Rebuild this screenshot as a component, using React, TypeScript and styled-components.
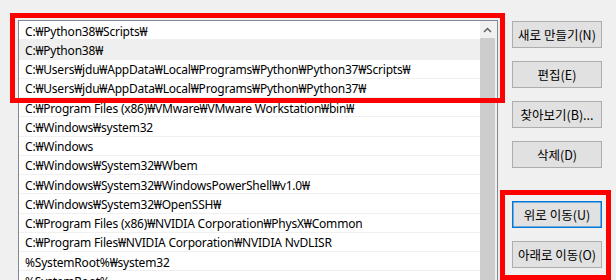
import React from "react";
import styled, { createGlobalStyle } from "styled-components";

const Global = createGlobalStyle`
  html, body { margin: 0; padding: 0; background: #f0f0f0; }
  body { font-family: "Noto Sans", "Noto Sans CJK KR", sans-serif; }
`;

const Page = styled.div`
  position: relative;
  width: 616px;
  height: 280px;
  overflow: hidden;
  background: #f0f0f0;
  display: flex;
  align-items: flex-start;
`;

const ListBox = styled.div`
  margin: 20px 0 0 18px;
  width: 480px;
  height: 300px;
  box-sizing: border-box;
  border: 1px solid #828790;
  background: #fff;
  display: flex;
`;

const Rows = styled.div`
  flex: 1;
  display: flex;
  flex-direction: column;
`;

const Row = styled.div<{ $selected?: boolean }>`
  height: 19.25px;
  flex: none;
  box-sizing: border-box;
  border-bottom: 1px solid #f0f0f0;
  background: ${(p) => (p.$selected ? "#efefef" : "#fff")};
  display: flex;
  align-items: center;
  padding: 2px 0 0 6px;
  font-family: "Noto Sans", "Noto Sans CJK KR", sans-serif;
  font-size: 12px;
  letter-spacing: -0.2px;
  color: #000;
  white-space: nowrap;
`;

const ScrollBar = styled.div`
  width: 17px;
  flex: none;
  display: flex;
  flex-direction: column;
  background: #f0f0f0;
`;

const ArrowButton = styled.div`
  height: 17px;
  display: flex;
  align-items: center;
  justify-content: center;
  padding-right: 2px;
`;

const Thumb = styled.div`
  flex: 1;
  width: 15px;
  background: #cdcdcd;
`;

const ButtonColumn = styled.div`
  margin: 21px 0 0 14px;
  display: flex;
  flex-direction: column;
  gap: 13px;
`;

const Button = styled.button<{ $default?: boolean; $spaced?: boolean }>`
  width: 90px;
  height: 27px;
  box-sizing: border-box;
  padding: 0;
  margin-top: ${(p) => (p.$spaced ? "20px" : "0")};
  background: #e1e1e1;
  border: 1px solid ${(p) => (p.$default ? "#0078d7" : "#adadad")};
  box-shadow: ${(p) => (p.$default ? "inset 0 0 0 0.5px #0078d7" : "none")};
  font-family: "Noto Sans CJK KR", "Noto Sans", sans-serif;
  font-size: 12.5px;
  color: #000;
  white-space: nowrap;
`;

const Highlight = styled.div<{ $x: number; $y: number; $w: number; $h: number }>`
  position: absolute;
  left: ${(p) => p.$x}px;
  top: ${(p) => p.$y}px;
  width: ${(p) => p.$w}px;
  height: ${(p) => p.$h}px;
  box-sizing: border-box;
  border: 5.5px solid #ff0000;
  pointer-events: none;
`;

const paths = [
  "C:₩Python38₩Scripts₩",
  "C:₩Python38₩",
  "C:₩Users₩jdu₩AppData₩Local₩Programs₩Python₩Python37₩Scripts₩",
  "C:₩Users₩jdu₩AppData₩Local₩Programs₩Python₩Python37₩",
  "C:₩Program Files (x86)₩VMware₩VMware Workstation₩bin₩",
  "C:₩Windows₩system32",
  "C:₩Windows",
  "C:₩Windows₩System32₩Wbem",
  "C:₩Windows₩System32₩WindowsPowerShell₩v1.0₩",
  "C:₩Windows₩System32₩OpenSSH₩",
  "C:₩Program Files (x86)₩NVIDIA Corporation₩PhysX₩Common",
  "C:₩Program Files₩NVIDIA Corporation₩NVIDIA NvDLISR",
  "%SystemRoot%₩system32",
  "%SystemRoot%",
];

export default function App() {
  return (
    <>
      <Global />
      <Page>
        <ListBox>
          <Rows>
            {paths.map((p, i) => (
              <Row key={i} $selected={i === 1}>
                {p}
              </Row>
            ))}
          </Rows>
          <ScrollBar>
            <ArrowButton>
              <svg width="9" height="6" viewBox="0 0 9 6">
                <path d="M1 5 L4.5 1.5 L8 5" fill="none" stroke="#606060" strokeWidth="1.5" />
              </svg>
            </ArrowButton>
            <Thumb />
          </ScrollBar>
        </ListBox>
        <ButtonColumn>
          <Button>새로 만들기(N)</Button>
          <Button>편집(E)</Button>
          <Button>찾아보기(B)...</Button>
          <Button>삭제(D)</Button>
          <Button $default $spaced>위로 이동(U)</Button>
          <Button>아래로 이동(O)</Button>
        </ButtonColumn>
        <Highlight $x={10} $y={13} $w={495} $h={90} />
        <Highlight $x={500} $y={190} $w={111} $h={90} />
      </Page>
    </>
  );
}
